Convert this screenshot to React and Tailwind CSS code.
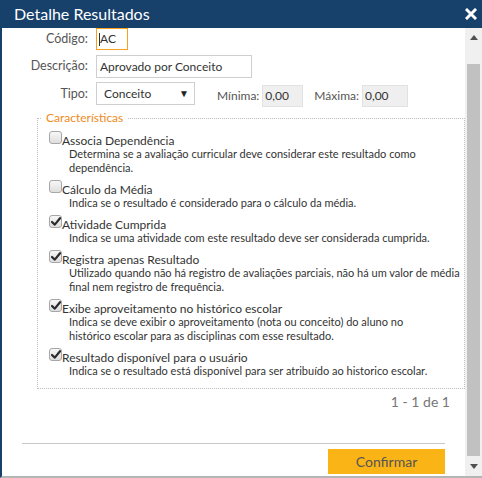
import React from 'react';

const items = [
  { label: 'Associa Dependência', checked: false, desc: ['Determina se a avaliação curricular deve considerar este resultado como', 'dependência.'] },
  { label: 'Cálculo da Média', checked: false, desc: ['Indica se o resultado é considerado para o cálculo da média.'] },
  { label: 'Atividade Cumprida', checked: true, desc: ['Indica se uma atividade com este resultado deve ser considerada cumprida.'] },
  { label: 'Registra apenas Resultado', checked: true, desc: ['Utilizado quando não há registro de avaliações parciais, não há um valor de média', 'final nem registro de frequência.'] },
  { label: 'Exibe aproveitamento no histórico escolar', checked: true, desc: ['Indica se deve exibir o aproveitamento (nota ou conceito) do aluno no', 'histórico escolar para as disciplinas com esse resultado.'] },
  { label: 'Resultado disponível para o usuário', checked: true, desc: ['Indica se o resultado está disponível para ser atribuído ao historico escolar.'] },
];

function Check({ checked }) {
  return (
    <span className="w-[13px] h-[13px] shrink-0 rounded-[3px] border border-[#a6a6a6] bg-gradient-to-b from-[#f7f7f7] to-[#dedede] flex items-center justify-center">
      {checked && (
        <svg width="10" height="9" viewBox="0 0 10 9">
          <path d="M1 5 L3.8 7.6 L9 1.2" fill="none" stroke="#2b2b2b" strokeWidth="2.2" strokeLinecap="round" strokeLinejoin="round" />
        </svg>
      )}
    </span>
  );
}

export default function App() {
  return (
    <div className="w-[482px] h-[478px] flex flex-col bg-white text-[#333] font-['Lato','Liberation_Sans',sans-serif]">
      <div className="h-[28px] shrink-0 bg-[#17406b] flex items-center justify-between pl-[14px] pr-[5px]">
        <span className="text-white text-[16px] leading-none">Detalhe Resultados</span>
        <svg width="12" height="12" viewBox="0 0 12 12">
          <path d="M2 2 L10 10 M10 2 L2 10" stroke="#fff" strokeWidth="3" strokeLinecap="square" />
        </svg>
      </div>

      <div className="flex-1 flex border-l-2 border-l-[#17406b] border-b-2 border-b-[#b5b5b5] min-h-0">
        <div className="flex-1 min-w-0 flex flex-col">
          {/* form rows */}
          <div className="flex items-center h-[22px]">
            <span className="w-[86px] text-right text-[12.5px] text-[#555]">Código:</span>
            <div className="ml-[8px] w-[32px] h-[22px] border border-[#f5a31a] flex items-center pl-[2px] text-[12px]">
              <span className="w-px h-[13px] bg-[#333]" />
              <span>AC</span>
            </div>
          </div>
          <div className="flex items-center h-[23px] mt-[5px]">
            <span className="w-[86px] text-right text-[12.5px] text-[#555]">Descrição:</span>
            <div className="ml-[8px] w-[156px] h-[23px] border border-[#cfcfcf] flex items-center pl-[3px] text-[12px]">Aprovado por Conceito</div>
          </div>
          <div className="flex items-start mt-[4px]">
            <span className="w-[86px] h-[23px] leading-[23px] text-right text-[12.5px] text-[#555]">Tipo:</span>
            <div className="ml-[8px] w-[99px] h-[23px] border border-[#cfcfcf] flex items-center justify-between pl-[7px] pr-[5px] text-[12px]">
              <span>Conceito</span>
              <span className="text-[10px] text-[#222]">▼</span>
            </div>
            <div className="flex items-center mt-[3px] ml-[22px] text-[12px] text-[#555]">
              <span>Mínima:</span>
              <div className="ml-[3px] w-[41px] h-[22px] bg-[#efefef] border border-[#e2e2e2] flex items-center pl-[2px] text-[12px] text-[#333]">0,00</div>
              <span className="ml-[11px]">Máxima:</span>
              <div className="ml-[3px] w-[46px] h-[22px] bg-[#efefef] border border-[#e2e2e2] flex items-center pl-[2px] text-[12px] text-[#333]">0,00</div>
            </div>
          </div>

          <fieldset className="ml-[35px] mt-[2px] h-[280px] min-w-0 border border-dotted border-[#bdbdbd] pl-[11px] pr-2">
            <legend className="text-[12px] leading-[18px] text-[#f08a1c] px-[4px] -ml-[7px]">Características</legend>
            <div className="flex flex-col gap-[5px] pt-[4px]">
              {items.map((it) => (
                <div key={it.label} className="flex flex-col">
                  <div className="flex items-start h-[16px]">
                    <Check checked={it.checked} />
                    <span className="text-[12px] leading-[16px] mt-[2px] whitespace-nowrap">{it.label}</span>
                  </div>
                  <div className="pl-[20px] text-[11px] leading-[14px]">
                    {it.desc.map((d) => (
                      <div key={d} className="whitespace-nowrap">{d}</div>
                    ))}
                  </div>
                </div>
              ))}
            </div>
          </fieldset>

          <div className="mt-[4px] text-right pr-[15px] text-[14px] leading-[18px] text-[#777]">1 - 1 de 1</div>
          <div className="mt-[32px] mx-[20px] h-px bg-[#c8c8c8]" />
          <div className="mt-[5px] mr-[20px] flex justify-end">
            <button className="w-[117px] h-[25px] bg-[#fbb416] text-[14px] text-[#555]">Confirmar</button>
          </div>
        </div>

        {/* scrollbar */}
        <div className="w-[17px] shrink-0 bg-[#f0f0f0] flex flex-col items-center">
          <div className="h-[17px] w-full flex items-center justify-center mt-[1px]">
            <svg width="8" height="5" viewBox="0 0 8 5"><path d="M0 5 L4 0 L8 5 Z" fill="#505050" /></svg>
          </div>
          <div className="mt-[18px] w-[13px] flex-1 bg-[#c1c1c1]" />
          <div className="h-[20px] w-full flex items-center justify-center">
            <svg width="8" height="5" viewBox="0 0 8 5"><path d="M0 0 L8 0 L4 5 Z" fill="#505050" /></svg>
          </div>
        </div>
      </div>
    </div>
  );
}
